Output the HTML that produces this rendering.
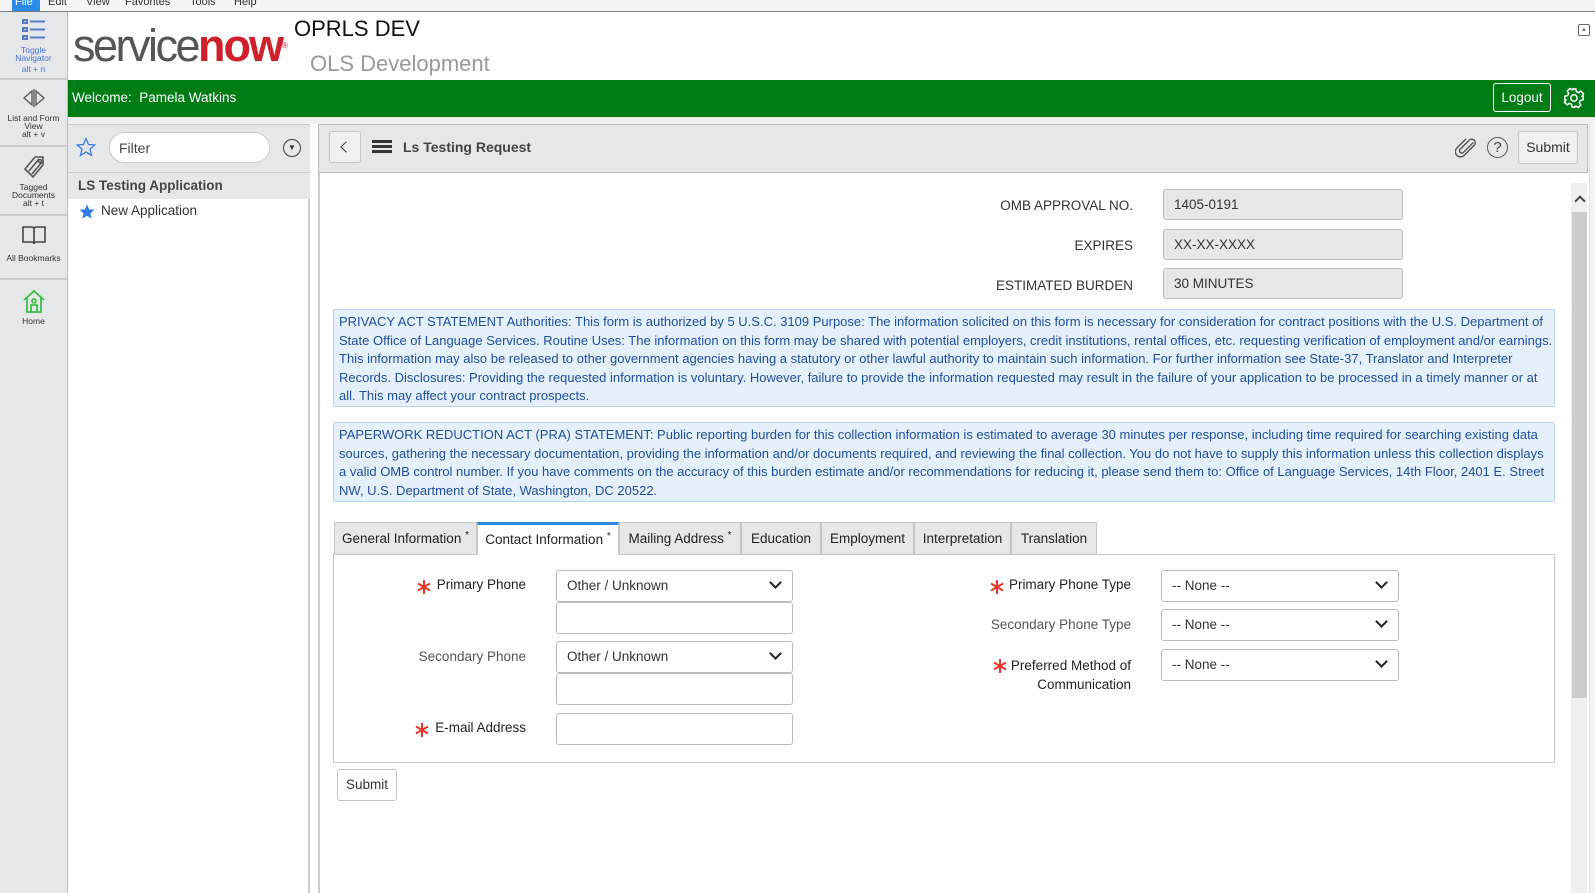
<!DOCTYPE html>
<html><head><meta charset="utf-8"><style>
*{box-sizing:border-box;margin:0;padding:0}
body{width:1595px;height:893px;position:relative;overflow:hidden;background:#fff;font-family:"Liberation Sans",Arial,sans-serif;color:#333;font-size:13px}
.a{position:absolute}
.menu{left:0;top:0;width:1595px;height:12px;background:#f5f5f5;border-bottom:1px solid #777;font-size:11px;overflow:hidden}
.menu span{position:absolute;top:-4px}
.side{left:0;top:12px;width:68px;height:881px;background:#e6e7e8;border-right:1px solid #bbb}
.si{position:absolute;left:0;width:67px;text-align:center;font-size:8.5px;line-height:8px;color:#333;border-bottom:2px solid #ccc}
.green{left:68px;top:80px;width:1527px;height:37px;background:#007c14;color:#fff;font-size:13.5px}
.inp{position:absolute;background:#fff;border:1px solid #bbb;border-radius:3px;font-size:13.5px;padding-left:10px;color:#333}
.ro{background:#e6e7e8;border-color:#bbb}
.lbl{position:absolute;text-align:right;font-size:13.5px;color:#333}
.star{position:absolute;width:14px;height:14px}
.box{position:absolute;left:333px;width:1222px;background:#e6f0fb;border:1px solid #b9d4f2;border-radius:2px;color:#1f4e9c;font-size:13px;line-height:18.5px;padding:3px 0 0 5px}
.tab{position:absolute;top:522px;height:32px;background:#e6e7e8;border:1px solid #c6c6c6;border-bottom:none;font-size:13.5px;line-height:31px;text-align:center;color:#222}
.tab i{font-style:normal;font-size:10px;position:relative;top:-5px}
.chev{position:absolute;right:12px;top:7px;width:9px;height:9px;border-right:2px solid #222;border-bottom:2px solid #222;transform:rotate(45deg)}
</style></head><body>
<svg width="0" height="0" style="position:absolute"><defs><g id="st"><path d="M7 0v14M1 3.5l12 7M1 10.5l12-7" stroke="#e8352b" stroke-width="2"/></g></defs></svg>
<div class="a menu"><span style="left:12px;width:28px;height:12px;top:0;background:#2a8bea"></span><span style="left:15px;color:#fff">File</span><span style="left:48px">Edit</span><span style="left:86px">View</span><span style="left:125px">Favorites</span><span style="left:190px">Tools</span><span style="left:234px">Help</span></div>

<div class="a side">
 <div class="si" style="top:0;height:68px">
  <svg width="26" height="24" style="margin-top:6px" viewBox="0 0 26 24" fill="none" stroke="#5878c8" stroke-width="2"><rect x="2" y="2" width="4" height="3"/><rect x="2" y="10" width="4" height="3"/><rect x="2" y="18" width="4" height="3"/><path d="M9 3.5h15M9 11.5h15M9 19.5h15"/></svg>
  <div style="color:#4a72d8;margin-top:3px">Toggle<br>Navigator<br><span style="line-height:14px">alt + n</span></div></div>
 <div class="si" style="top:68px;height:67px">
  <svg width="26" height="20" style="margin-top:8px" viewBox="0 0 26 20" fill="none" stroke="#555" stroke-width="1.3"><path d="M11 3L3 10l8 7zM15 3l8 7-8 7zM13 1v18"/></svg>
  <div style="margin-top:5px">List and Form<br>View<br>alt + v</div></div>
 <div class="si" style="top:135px;height:69px">
  <svg width="26" height="26" style="margin-top:6px" viewBox="0 0 26 26" fill="none" stroke="#555" stroke-width="1.6"><path d="M4 16L14 4h8v8L12 24zM8 18l10-12M11 21l10-12"/><circle cx="19" cy="8" r="1.5"/></svg>
  <div style="margin-top:3px">Tagged<br>Documents<br>alt + t</div></div>
 <div class="si" style="top:204px;height:64px">
  <svg width="26" height="22" style="margin-top:8px" viewBox="0 0 26 22" fill="none" stroke="#444" stroke-width="1.6"><path d="M2 3h9c1 0 2 1 2 2v15c0-1-1-2-2-2H2zM24 3h-9c-1 0-2 1-2 2v15c0-1 1-2 2-2h9z"/></svg>
  <div style="margin-top:7px">All Bookmarks</div></div>
 <div class="si" style="top:268px;height:60px;border:none">
  <svg width="24" height="26" style="margin-top:8px" viewBox="0 0 24 26" fill="none" stroke="#3cbf4a" stroke-width="1.8"><path d="M2 12L12 3l10 9M5 10v14h14V10M9 24v-7h6v7"/><circle cx="12" cy="13" r="2"/></svg>
  <div style="margin-top:2px">Home</div></div>
</div>

<div class="a" style="left:73px;top:20px;font-size:45px;letter-spacing:-2.5px;color:#555;line-height:52px">service<span style="color:#d0202c;font-weight:bold;letter-spacing:-2px">now</span><span style="font-size:8px;color:#d0202c;vertical-align:top">®</span></div>
<div class="a" style="left:294px;top:16px;font-size:22px;color:#111">OPRLS DEV</div>
<div class="a" style="left:310px;top:51px;font-size:22px;color:#999">OLS Development</div>
<div class="a" style="left:1578px;top:24px;width:12px;height:12px;border:1px solid #667;border-radius:2px;font-size:6px;text-align:center;line-height:10px;color:#667">▲</div>

<div class="a green"><span class="a" style="left:4px;top:10px">Welcome:&nbsp; Pamela Watkins</span>
 <div class="a" style="left:1425px;top:3px;width:58px;height:29px;border:1px solid #fff;border-radius:3px;text-align:center;line-height:27px">Logout</div>
 <svg class="a" style="left:1495px;top:7px" width="22" height="22" viewBox="0 0 24 24" fill="none" stroke="#fff" stroke-width="1.6"><circle cx="12" cy="12" r="3.5"/><path d="M10 2h4l.6 3 2.4 1.2 2.6-1.6 2.8 2.8-1.6 2.6L22 10v4l-3 .6-1.2 2.4 1.6 2.6-2.8 2.8-2.6-1.6-2.4 1.2L14 22h-4l-.6-3-2.4-1.2-2.6 1.6-2.8-2.8 1.6-2.6L2 14v-4l3-.6 1.2-2.4-1.6-2.6 2.8-2.8 2.6 1.6 2.4-1.2z"/></svg>
</div>
<div class="a" style="left:68px;top:117px;width:1527px;height:7px;background:#f0f0f0"></div>

<div class="a" style="left:68px;top:124px;width:242px;height:769px;background:#fff;border-right:2px solid #ccc"></div>
<div class="a" style="left:68px;top:124px;width:242px;height:49px;background:#e6e7e8;border-bottom:1px solid #ccc;border-top:1px solid #ccc"></div>
<svg class="a" style="left:76px;top:137px" width="20" height="20" viewBox="0 0 24 24" fill="none" stroke="#3d7ee0" stroke-width="1.6"><path d="M12 2l3 7 7.5.6-5.7 5 1.8 7.4L12 18l-6.6 4 1.8-7.4-5.7-5L9 9z"/></svg>
<div class="a" style="left:109px;top:132px;width:161px;height:31px;background:#fff;border:1px solid #ccc;border-radius:16px;font-size:14px;padding:7px 0 0 9px;color:#444">Filter</div>
<div class="a" style="left:283px;top:139px;width:18px;height:18px;border:1.5px solid #444;border-radius:50%;font-size:8px;text-align:center;line-height:16px;color:#333">▼</div>
<div class="a" style="left:68px;top:173px;width:242px;height:26px;background:#e6e7e8;font-size:13.5px;font-weight:bold;color:#444;padding:5px 0 0 10px">LS Testing Application</div>
<svg class="a" style="left:78px;top:203px" width="18" height="17" viewBox="0 0 24 24" fill="#2f7de1"><path d="M12 2l3 7 7.5.6-5.7 5 1.8 7.4L12 18l-6.6 4 1.8-7.4-5.7-5L9 9z"/></svg>
<div class="a" style="left:101px;top:203px;font-size:13.5px;color:#333">New Application</div>

<div class="a" style="left:318px;top:124px;width:1270px;height:769px;border-left:2px solid #ccc;background:#fff"></div>
<div class="a" style="left:318px;top:124px;width:1270px;height:49px;background:#e6e7e8;border:1px solid #bbb"></div>
<div class="a" style="left:329px;top:131px;width:32px;height:32px;border:1px solid #c6c6c6;border-radius:3px;background:#eef0f1"></div>
<div class="a" style="left:342px;top:143px;width:8px;height:8px;border-left:1.5px solid #333;border-bottom:1.5px solid #333;transform:rotate(45deg)"></div>
<div class="a" style="left:372px;top:140px;width:20px;height:3px;background:#333;box-shadow:0 5px 0 #333,0 10px 0 #333"></div>
<div class="a" style="left:403px;top:139px;font-size:14px;font-weight:bold;color:#444">Ls Testing Request</div>
<svg class="a" style="left:1455px;top:137px" width="22" height="22" viewBox="0 0 24 24" fill="none" stroke="#555" stroke-width="1.5"><path d="M20 6L9 17a2.5 2.5 0 01-3.5-3.5L16 3a4 4 0 015.5 5.5L10 20a5.5 5.5 0 01-8-8L12 2"/></svg>
<div class="a" style="left:1487px;top:137px;width:21px;height:21px;border:1.5px solid #555;border-radius:50%;text-align:center;line-height:19px;font-size:15px;color:#444">?</div>
<div class="a" style="left:1518px;top:131px;width:60px;height:33px;border:1px solid #c6c6c6;border-radius:3px;background:#eef0f1;text-align:center;line-height:31px;font-size:14px;color:#333">Submit</div>

<div class="a" style="left:1571px;top:183px;width:16px;height:710px;background:#efefef"></div>
<div class="a" style="left:1572px;top:212px;width:15px;height:486px;background:#cdcdcd"></div>
<div class="a" style="left:1576px;top:197px;width:8px;height:8px;border-left:2px solid #444;border-top:2px solid #444;transform:rotate(45deg)"></div>
<div class="a" style="left:1589px;top:124px;width:6px;height:769px;background:#f3f3f3;border-left:1px solid #ddd"></div>

<div class="lbl" style="left:900px;width:233px;top:198px">OMB APPROVAL NO.</div>
<div class="lbl" style="left:900px;width:233px;top:238px">EXPIRES</div>
<div class="lbl" style="left:900px;width:233px;top:278px">ESTIMATED BURDEN</div>
<div class="inp ro" style="left:1163px;top:189px;width:240px;height:31px;line-height:29px">1405-0191</div>
<div class="inp ro" style="left:1163px;top:229px;width:240px;height:31px;line-height:29px">XX-XX-XXXX</div>
<div class="inp ro" style="left:1163px;top:268px;width:240px;height:31px;line-height:29px">30 MINUTES</div>

<div class="box" style="top:309px;height:98px">PRIVACY ACT STATEMENT Authorities: This form is authorized by 5 U.S.C. 3109 Purpose: The information solicited on this form is necessary for consideration for contract positions with the U.S. Department of State Office of Language Services. Routine Uses: The information on this form may be shared with potential employers, credit institutions, rental offices, etc. requesting verification of employment and/or earnings. This information may also be released to other government agencies having a statutory or other lawful authority to maintain such information. For further information see State-37, Translator and Interpreter Records. Disclosures: Providing the requested information is voluntary. However, failure to provide the information requested may result in the failure of your application to be processed in a timely manner or at all. This may affect your contract prospects.</div>
<div class="box" style="top:422px;height:80px">PAPERWORK REDUCTION ACT (PRA) STATEMENT: Public reporting burden for this collection information is estimated to average 30 minutes per response, including time required for searching existing data sources, gathering the necessary documentation, providing the information and/or documents required, and reviewing the final collection. You do not have to supply this information unless this collection displays a valid OMB control number. If you have comments on the accuracy of this burden estimate and/or recommendations for reducing it, please send them to: Office of Language Services, 14th Floor, 2401 E. Street NW, U.S. Department of State, Washington, DC 20522.</div>

<div class="a" style="left:333px;top:554px;width:1222px;height:209px;border:1px solid #c6c6c6"></div>
<div class="tab" style="left:334px;width:143px">General Information <i>*</i></div>
<div class="tab" style="left:477px;width:142px;background:#fff;border-top:3px solid #2f88e0;height:33px;line-height:29px">Contact Information <i>*</i></div>
<div class="tab" style="left:619px;width:122px">Mailing Address <i>*</i></div>
<div class="tab" style="left:741px;width:80px">Education</div>
<div class="tab" style="left:821px;width:93px">Employment</div>
<div class="tab" style="left:914px;width:97px">Interpretation</div>
<div class="tab" style="left:1011px;width:86px">Translation</div>

<svg class="star" style="left:417px;top:580px"><use href="#st"/></svg>
<div class="lbl" style="left:400px;width:126px;top:577px;color:#222">Primary Phone</div>
<div class="lbl" style="left:380px;width:146px;top:649px;color:#555">Secondary Phone</div>
<svg class="star" style="left:415px;top:723px"><use href="#st"/></svg>
<div class="lbl" style="left:400px;width:126px;top:720px;color:#222">E-mail Address</div>
<div class="inp" style="left:556px;top:570px;width:237px;height:32px;line-height:30px">Other / Unknown<span class="chev"></span></div>
<div class="inp" style="left:556px;top:602px;width:237px;height:32px"></div>
<div class="inp" style="left:556px;top:641px;width:237px;height:32px;line-height:30px">Other / Unknown<span class="chev"></span></div>
<div class="inp" style="left:556px;top:673px;width:237px;height:32px"></div>
<div class="inp" style="left:556px;top:713px;width:237px;height:32px"></div>

<svg class="star" style="left:990px;top:580px"><use href="#st"/></svg>
<div class="lbl" style="left:980px;width:151px;top:577px;color:#222">Primary Phone Type</div>
<div class="lbl" style="left:960px;width:171px;top:617px;color:#555">Secondary Phone Type</div>
<svg class="star" style="left:993px;top:659px"><use href="#st"/></svg>
<div class="lbl" style="left:980px;width:151px;top:656px;color:#222;line-height:19px">Preferred Method of<br>Communication</div>
<div class="inp" style="left:1161px;top:570px;width:238px;height:32px;line-height:30px">-- None --<span class="chev"></span></div>
<div class="inp" style="left:1161px;top:609px;width:238px;height:32px;line-height:30px">-- None --<span class="chev"></span></div>
<div class="inp" style="left:1161px;top:649px;width:238px;height:32px;line-height:30px">-- None --<span class="chev"></span></div>

<div class="a" style="left:337px;top:769px;width:60px;height:32px;border:1px solid #c6c6c6;border-radius:3px;text-align:center;line-height:30px;font-size:13.5px;color:#333">Submit</div>
</body></html>
